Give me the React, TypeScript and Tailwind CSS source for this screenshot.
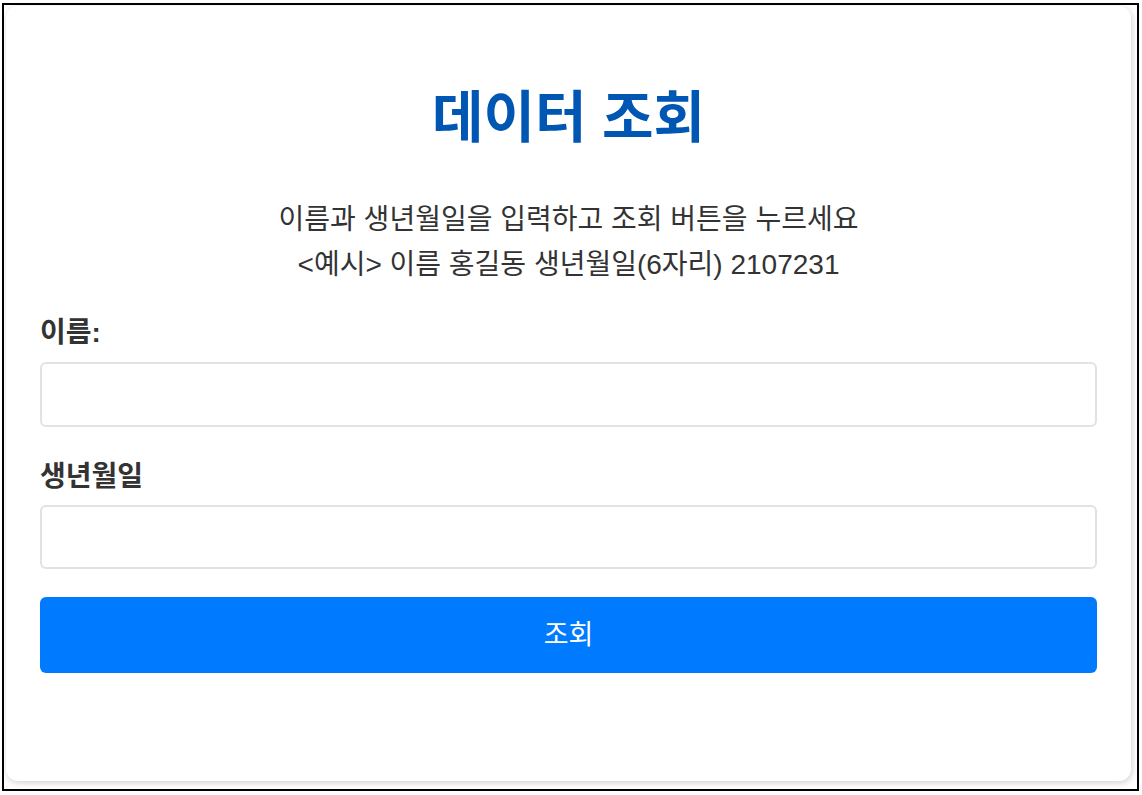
export default function App() {
  return (
    <div
      className="h-[795px] w-[1142px] bg-white pl-[2px] pt-[3px]"
      style={{ fontFamily: '"Liberation Sans", "Noto Sans CJK KR", sans-serif' }}
    >
      <div className="h-[788px] w-[1137px] border-2 border-black bg-white pl-[2px] pt-[1px]">
        <div className="flex h-[775px] w-[1125px] flex-col rounded-xl bg-white px-[34px] pt-[74px] shadow-[1px_2px_6px_rgba(0,0,0,0.18)]">
          <h1 className="text-center text-[56px] font-bold leading-[76px] text-[#0056b3]">데이터 조회</h1>
          <div className="mt-[41px] text-center text-[28px] leading-[45px] text-[#333333]">
            <p>이름과 생년월일을 입력하고 조회 버튼을 누르세요</p>
            <p>&lt;예시&gt; 이름 홍길동 생년월일(6자리) 2107231</p>
          </div>
          <label className="mt-[24px] block text-[28px] font-bold leading-[44px] text-[#333333]">이름:</label>
          <input
            type="text"
            className="mt-[7px] h-[65px] w-full rounded-md border-2 border-[#e2e2e2] bg-white px-3 text-[22px] outline-none"
          />
          <label className="mt-[28px] block text-[28px] font-bold leading-[44px] text-[#333333]">생년월일</label>
          <input
            type="text"
            className="mt-[6px] h-[64px] w-full rounded-md border-2 border-[#e2e2e2] bg-white px-3 text-[22px] outline-none"
          />
          <button
            type="button"
            className="mt-[28px] h-[76px] w-full rounded-md bg-[#007bff] text-[27px] text-white"
          >
            조회
          </button>
        </div>
      </div>
    </div>
  );
}
